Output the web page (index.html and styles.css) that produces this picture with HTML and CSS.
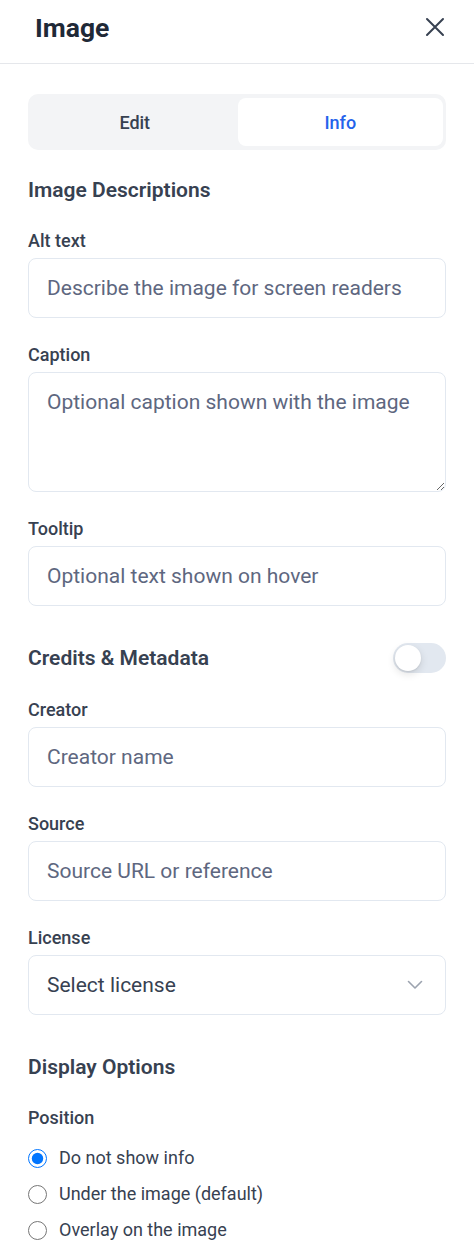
FILE: index.html
```html
<!DOCTYPE html>
<html lang="en">
<head>
<meta charset="utf-8">
<title>Image</title>
<link rel="stylesheet" href="styles.css">
</head>
<body>
<div class="panel">
  <header class="header">
    <h1 class="title">Image</h1>
    <button class="close" aria-label="Close">
      <svg width="20" height="20" viewBox="0 0 20 20"><path d="M2 2L18 18M18 2L2 18" stroke="#374151" stroke-width="2" stroke-linecap="round"/></svg>
    </button>
  </header>
  <main class="content">
    <div class="tabs">
      <div class="tab">Edit</div>
      <div class="tab active">Info</div>
    </div>

    <h2 class="section-title">Image Descriptions</h2>

    <div class="field">
      <label class="label">Alt text</label>
      <input class="input" type="text" placeholder="Describe the image for screen readers">
    </div>
    <div class="field">
      <label class="label">Caption</label>
      <textarea class="input textarea" placeholder="Optional caption shown with the image"></textarea>
    </div>
    <div class="field">
      <label class="label">Tooltip</label>
      <input class="input" type="text" placeholder="Optional text shown on hover">
    </div>

    <div class="section-row">
      <h2 class="section-title">Credits &amp; Metadata</h2>
      <div class="toggle"><span class="knob"></span></div>
    </div>

    <div class="field">
      <label class="label">Creator</label>
      <input class="input" type="text" placeholder="Creator name">
    </div>
    <div class="field">
      <label class="label">Source</label>
      <input class="input" type="text" placeholder="Source URL or reference">
    </div>
    <div class="field">
      <label class="label">License</label>
      <div class="input select">
        <span>Select license</span>
        <svg width="16" height="10" viewBox="0 0 16 10"><path d="M1.5 1.5L8 8L14.5 1.5" fill="none" stroke="#9ca3af" stroke-width="1.6" stroke-linecap="round" stroke-linejoin="round"/></svg>
      </div>
    </div>

    <h2 class="section-title display">Display Options</h2>

    <div class="position">
      <label class="label">Position</label>
      <div class="radios">
        <label class="radio"><input type="radio" name="pos" checked> Do not show info</label>
        <label class="radio"><input type="radio" name="pos"> Under the image (default)</label>
        <label class="radio"><input type="radio" name="pos"> Overlay on the image</label>
      </div>
    </div>
  </main>
</div>
</body>
</html>
```

FILE: styles.css
```css
* { box-sizing: border-box; }
html, body { margin: 0; padding: 0; background: #fff; }
body { font-family: Roboto, "Noto Sans", Arial, sans-serif; color: #374151; }

.panel { width: 474px; }

.header {
  height: 64px;
  border-bottom: 1px solid #e5e7eb;
  display: flex;
  align-items: center;
  justify-content: space-between;
  padding: 0 29px 0 35px;
}
.title {
  margin: 0;
  font-size: 26.5px;
  font-weight: 700;
  color: #1f2937;
  line-height: 32px;
  margin-top: -8px;
}
.close {
  border: 0; background: none; padding: 0; margin-top: -10px;
  display: flex; cursor: pointer;
}

.content {
  padding: 30px 28px 0 28px;
  display: flex;
  flex-direction: column;
  gap: 25px;
}

.tabs {
  height: 56px;
  background: #f3f4f6;
  border-radius: 10px;
  padding: 4px 3px 4px 4px;
  display: flex;
}
.tab {
  flex: 1;
  display: flex; align-items: center; justify-content: center;
  font-size: 18px; font-weight: 500; color: #374151;
  border-radius: 8px;
}
.tab.active { background: #fff; color: #2563eb; }

.tabs + .section-title { margin-top: 1px; }

.section-title {
  margin: 0;
  font-size: 21px;
  font-weight: 600;
  line-height: 28px;
  color: #374151;
}

.field { display: flex; flex-direction: column; }
.label {
  font-size: 18px;
  font-weight: 500;
  line-height: 24px;
  color: #374151;
  margin-bottom: 5px;
}
.input {
  height: 60px;
  width: 100%;
  border: 1px solid #e2e8f0;
  border-radius: 8px;
  padding: 0 18px;
  font-family: inherit;
  font-size: 21px;
  color: #374151;
  background: #fff;
  outline: none;
}
.input::placeholder { color: #5e6780; }
.textarea {
  height: 120px;
  padding-top: 15px;
  resize: vertical;
  line-height: 28px;
}

.section-row {
  margin-top: 12px;
  height: 30px;
  display: flex; align-items: center; justify-content: space-between;
}
.toggle {
  width: 53px; height: 30px;
  border-radius: 15px;
  background: #e2e8f0;
  padding: 2px;
  display: flex; align-items: center;
}
.knob {
  width: 26px; height: 26px; border-radius: 50%;
  background: #fff;
  box-shadow: 0 3px 8px rgba(0,0,0,0.12), 0 1px 2px rgba(0,0,0,0.08);
}

.select {
  display: flex; align-items: center; justify-content: space-between;
  padding-right: 22px;
  color: #374151;
}

.display { margin-top: 13px; }

.position { display: flex; flex-direction: column; }
.position .label { margin-bottom: 16px; }
.radios { display: flex; flex-direction: column; gap: 12px; }
.radio {
  display: flex; align-items: center;
  font-size: 18px; line-height: 24px; color: #374151;
  gap: 12px;
}
.radio input {
  width: 19px; height: 19px; margin: 0;
}
```
